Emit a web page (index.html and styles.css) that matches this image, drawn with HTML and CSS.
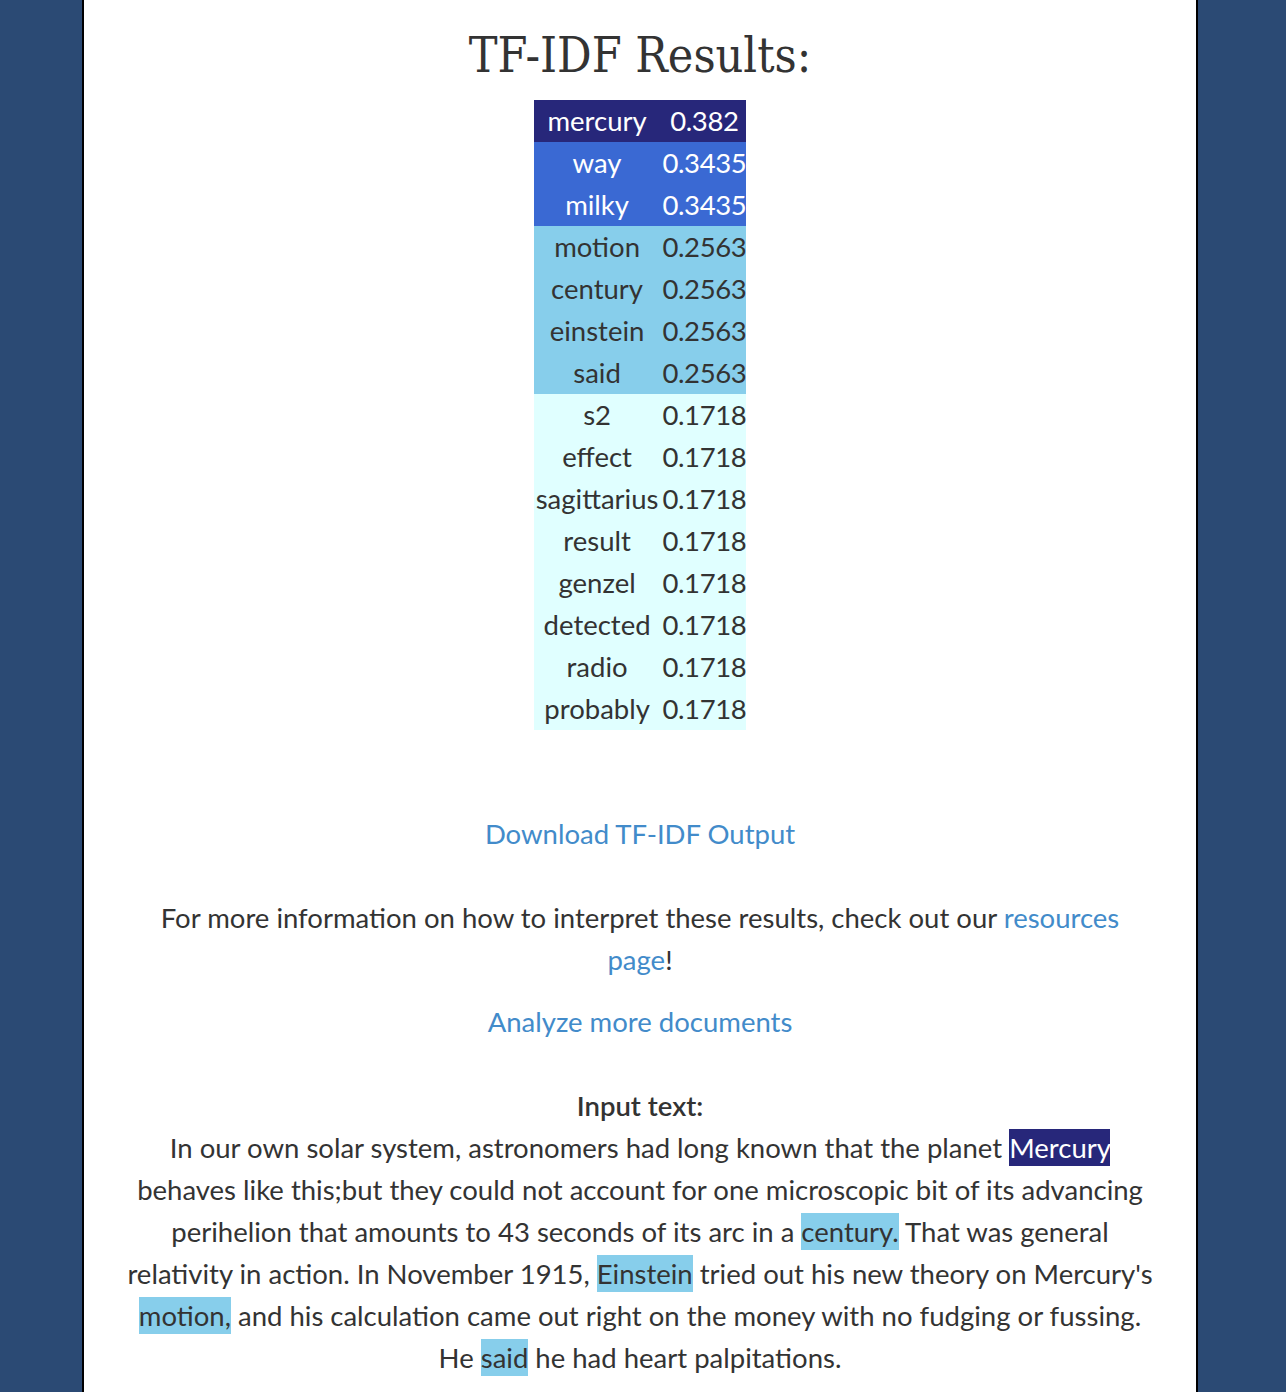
FILE: index.html
```html
<!DOCTYPE html>
<html lang="en">
<head>
<meta charset="utf-8">
<title>TF-IDF Results</title>
<link rel="stylesheet" href="styles.css">
</head>
<body>
<main class="page">
  <h1 class="title">TF-IDF Results:</h1>
  <table class="results">
    <tbody>
      <tr class="lvl-1"><td>mercury</td><td>0.382</td></tr>
      <tr class="lvl-2"><td>way</td><td>0.3435</td></tr>
      <tr class="lvl-2"><td>milky</td><td>0.3435</td></tr>
      <tr class="lvl-3"><td>motion</td><td>0.2563</td></tr>
      <tr class="lvl-3"><td>century</td><td>0.2563</td></tr>
      <tr class="lvl-3"><td>einstein</td><td>0.2563</td></tr>
      <tr class="lvl-3"><td>said</td><td>0.2563</td></tr>
      <tr class="lvl-4"><td>s2</td><td>0.1718</td></tr>
      <tr class="lvl-4"><td>effect</td><td>0.1718</td></tr>
      <tr class="lvl-4"><td>sagittarius</td><td>0.1718</td></tr>
      <tr class="lvl-4"><td>result</td><td>0.1718</td></tr>
      <tr class="lvl-4"><td>genzel</td><td>0.1718</td></tr>
      <tr class="lvl-4"><td>detected</td><td>0.1718</td></tr>
      <tr class="lvl-4"><td>radio</td><td>0.1718</td></tr>
      <tr class="lvl-4"><td>probably</td><td>0.1718</td></tr>
    </tbody>
  </table>

  <p class="download"><a href="#">Download TF-IDF Output</a></p>

  <p class="info">For more information on how to interpret these results, check out our <a href="#">resources page</a>!</p>

  <p class="again"><a href="#">Analyze more documents</a></p>

  <section class="input">
    <h2 class="input-label">Input text:</h2>
    <p class="input-text">In our own solar system, astronomers had long known that the planet <span class="hl hl-1">Mercury</span> behaves like this;but they could not account for one microscopic bit of its advancing perihelion that amounts to 43 seconds of its arc in a <span class="hl hl-3">century.</span> That was general relativity in action. In November 1915, <span class="hl hl-3">Einstein</span> tried out his new theory on Mercury's <span class="hl hl-3">motion,</span> and his calculation came out right on the money with no fudging or fussing. He <span class="hl hl-3">said</span> he had heart palpitations.</p>
  </section>
</main>
</body>
</html>
```
FILE: styles.css
```css
html, body {
  margin: 0;
  padding: 0;
}

body {
  background: #2b4a74;
  font-family: "Lato", "DejaVu Sans", sans-serif;
  font-size: 27.5px;
  line-height: 42px;
  color: #333333;
}

.page {
  box-sizing: border-box;
  width: 1116px;
  min-height: 1392px;
  margin-left: 82px;
  padding: 25px 41px 0;
  background: #ffffff;
  border-left: 2px solid #000000;
  border-right: 2px solid #000000;
  text-align: center;
}

.title {
  margin: 0 0 15px;
  font-family: "DejaVu Serif Condensed", "DejaVu Serif", serif;
  font-weight: normal;
  font-size: 48px;
  line-height: 60px;
  color: #333333;
}

.results {
  margin: 0 auto;
  border-collapse: collapse;
  border-spacing: 0;
}

.results td {
  padding: 0 3px 0 2px;
  height: 42px;
  line-height: 40px;
  text-align: center;
  white-space: nowrap;
}

.results td + td {
  padding: 0 0 0 1px;
  letter-spacing: -0.4px;
}

.lvl-1 { background: #27277a; color: #ffffff; }
.lvl-2 { background: #3a69d3; color: #ffffff; }
.lvl-3 { background: #87ceeb; color: #333333; }
.lvl-4 { background: #e0ffff; color: #333333; }

a {
  color: #428bca;
  text-decoration: none;
}

.download {
  margin: 83px 0 0;
}

.info {
  margin: 42px 0 0;
  padding: 0 6px;
}

.again {
  margin: 20px 0 0;
}

.input {
  margin-top: 42px;
}

.input-label {
  margin: 0;
  font-size: 27.5px;
  line-height: 42px;
  font-weight: 600;
  color: #333333;
}

.input-text {
  margin: 0;
}

.hl {
  padding: 2px 0;
}

.hl-1 {
  background: #27277a;
  color: #ffffff;
}

.hl-3 {
  background: #87ceeb;
}
```
